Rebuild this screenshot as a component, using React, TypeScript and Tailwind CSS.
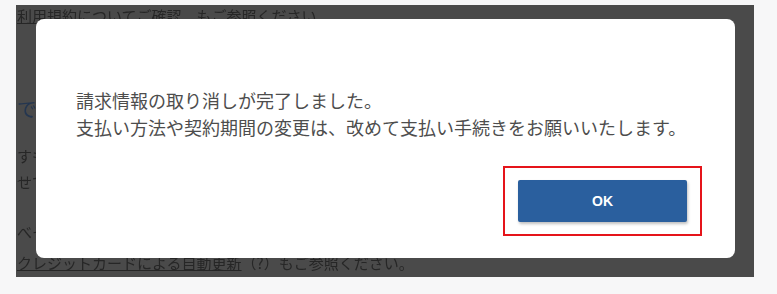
export default function App() {
  return (
    <div className="min-h-[294px] w-[777px] bg-[#f7f7f8] pl-[16px] pt-[5px]">
      <div className="relative h-[272px] w-[738px] overflow-hidden bg-[#4a4a4a] font-['Noto_Sans_CJK_JP',sans-serif] text-[15px] text-[#262626]">
        <BackgroundPage />
        <div className="absolute left-[20px] top-[14px] h-[239px] w-[699px] rounded-[8px] bg-white">
          <div className="pl-[40px] pt-[68px] text-[18px] leading-[27px] text-[#4d4d4d]">
            <p>請求情報の取り消しが完了しました。</p>
            <p>支払い方法や契約期間の変更は、改めて支払い手続きをお願いいたします。</p>
          </div>
          <div className="flex justify-end pr-[33px] pt-[25px]">
            <div className="flex h-[70px] w-[199px] items-center justify-center border-2 border-[#e5141a]">
              <button className="h-[42px] w-[169px] rounded-[2px] bg-[#2a5f9e] font-['Liberation_Sans',sans-serif] text-[14px] font-bold text-white shadow-[1px_2px_3px_rgba(0,0,0,0.25)]">
                OK
              </button>
            </div>
          </div>
        </div>
      </div>
    </div>
  );
}

function BackgroundPage() {
  return (
    <div className="flex flex-col pl-[1px] leading-[25px] blur-[0.4px]">
      <p className="-mt-[2px] whitespace-nowrap">
        <span className="underline">利用規約</span>についてご確認、もご参照ください。
      </p>
      <p className="mt-[68px] text-[20px] text-[#243650]">で</p>
      <p className="mt-[22px]">すも</p>
      <p className="mt-[1px]">せで</p>
      <p className="mt-[25px]">べそ</p>
      <p className="mt-[6px] whitespace-nowrap">
        <span className="underline">クレジットカードによる自動更新</span>（?）もご参照ください。
      </p>
    </div>
  );
}
